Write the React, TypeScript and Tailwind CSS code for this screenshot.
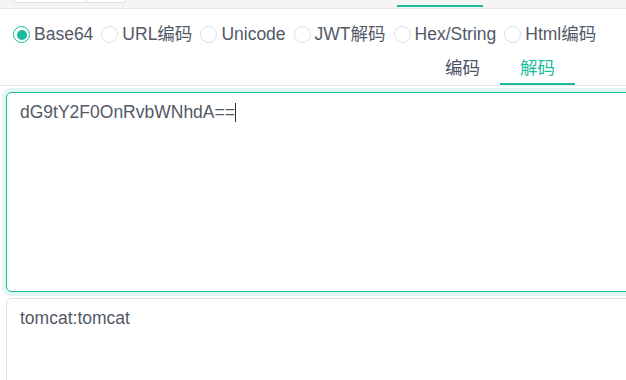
import { useState } from "react";

const opcoes = ["Base64", "URL编码", "Unicode", "JWT解码", "Hex/String", "Html编码"];
const abas = ["编码", "解码"];

export default function App() {
  const [modo, setModo] = useState("Base64");
  const [aba, setAba] = useState("解码");

  return (
    <div className="w-full h-[380px] overflow-hidden bg-white text-[#525966] font-['Liberation_Sans','Noto_Sans_CJK_SC',sans-serif]">
      {/* faixa superior cortada */}
      <div className="flex h-[9px] bg-[#f5f5f5] border-b border-[#e4e7ed]">
        <div className="ml-[13px] h-[3px] w-[74px] border-x border-b border-[#dcdfe6] rounded-bl-[4px] bg-white" />
        <div className="h-[3px] w-[39px] border-r border-b border-[#dcdfe6] rounded-br-[4px] bg-white" />
        <div className="ml-[271px] mt-[5px] h-[2px] w-[86px] bg-[#1abc9c]" />
      </div>

      <div className="flex items-start pt-[17px] pl-[13px] h-[43px]">
        {opcoes.map((op) => {
          const ativo = op === modo;
          return (
            <button key={op} type="button" onClick={() => setModo(op)} className="flex items-center mr-[8px] h-[17px] cursor-pointer">
              <span className={`flex items-center justify-center w-[17px] h-[17px] rounded-full bg-white ${ativo ? "border-[1.5px] border-[#1abc9c]" : "border border-[#dcdfe6]"}`}>
                {ativo && <span className="w-[10px] h-[10px] rounded-full bg-[#1abc9c]" />}
              </span>
              <span className="ml-[4px] text-[17.5px] leading-[17px] whitespace-nowrap">{op}</span>
            </button>
          );
        })}
      </div>

      <div className="flex justify-end pr-[51px] border-b border-[#e4e7ed]">
        {abas.map((a) => (
          <button
            key={a}
            type="button"
            onClick={() => setAba(a)}
            className={`h-[33px] px-[20px] pt-[2px] flex items-center text-[17.5px] border-b-2 ${a === aba ? "border-[#1abc9c] text-[#1abc9c]" : "border-transparent text-[#4a5160]"}`}
          >
            {a}
          </button>
        ))}
      </div>

      <div className="pl-[6px] pt-[6px]">
        <div className="w-[660px] h-[200px] border border-[#1abc9c] rounded-[5px] shadow-[0_0_0_4px_#e4f6f1] px-[13px] pt-[6px] text-[17.5px] leading-[1.5] text-[#525966]">
          dG9tY2F0OnRvbWNhdA==<span className="inline-block w-px h-[19px] bg-[#303133] align-[-4px]" />
        </div>
        <div className="mt-[6px] w-[660px] h-[200px] border border-[#dcdfe6] rounded-[5px] px-[13px] pt-[6px] text-[17.5px] leading-[1.5] text-[#525966]">
          tomcat:tomcat
        </div>
      </div>
    </div>
  );
}
